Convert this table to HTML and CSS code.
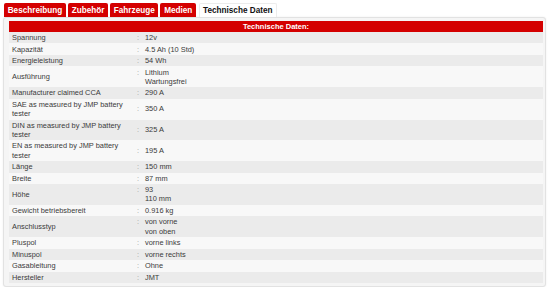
FILE: index.html
```html
<!DOCTYPE html>
<html lang="de">
<head>
<meta charset="utf-8">
<title>Technische Daten</title>
<link rel="stylesheet" href="styles.css">
</head>
<body>
<div class="wrap">
  <nav class="tabs">
    <span class="tab">Beschreibung</span>
    <span class="tab">Zubehör</span>
    <span class="tab">Fahrzeuge</span>
    <span class="tab">Medien</span>
    <span class="tab active">Technische Daten</span>
  </nav>
  <section class="panel">
    <div class="head">Technische Daten:</div>
    <div class="rows">
      <div class="row"><div class="lbl">Spannung</div><div class="val"><span class="col">:</span><span class="txt">12v</span></div></div>
      <div class="row"><div class="lbl">Kapazität</div><div class="val"><span class="col">:</span><span class="txt">4.5 Ah (10 Std)</span></div></div>
      <div class="row"><div class="lbl">Energieleistung</div><div class="val"><span class="col">:</span><span class="txt">54 Wh</span></div></div>
      <div class="row"><div class="lbl">Ausführung</div><div class="val"><span class="col">:</span><span class="txt">Lithium<br>Wartungsfrei</span></div></div>
      <div class="row"><div class="lbl">Manufacturer claimed CCA</div><div class="val"><span class="col">:</span><span class="txt">290 A</span></div></div>
      <div class="row"><div class="lbl">SAE as measured by JMP battery tester</div><div class="val"><span class="col">:</span><span class="txt">350 A</span></div></div>
      <div class="row"><div class="lbl">DIN as measured by JMP battery tester</div><div class="val"><span class="col">:</span><span class="txt">325 A</span></div></div>
      <div class="row"><div class="lbl">EN as measured by JMP battery tester</div><div class="val"><span class="col">:</span><span class="txt">195 A</span></div></div>
      <div class="row"><div class="lbl">Länge</div><div class="val"><span class="col">:</span><span class="txt">150 mm</span></div></div>
      <div class="row"><div class="lbl">Breite</div><div class="val"><span class="col">:</span><span class="txt">87 mm</span></div></div>
      <div class="row"><div class="lbl">Höhe</div><div class="val"><span class="col">:</span><span class="txt">93<br>110 mm</span></div></div>
      <div class="row"><div class="lbl">Gewicht betriebsbereit</div><div class="val"><span class="col">:</span><span class="txt">0.916 kg</span></div></div>
      <div class="row"><div class="lbl">Anschlusstyp</div><div class="val"><span class="col">:</span><span class="txt">von vorne<br>von oben</span></div></div>
      <div class="row"><div class="lbl">Pluspol</div><div class="val"><span class="col">:</span><span class="txt">vorne links</span></div></div>
      <div class="row"><div class="lbl">Minuspol</div><div class="val"><span class="col">:</span><span class="txt">vorne rechts</span></div></div>
      <div class="row"><div class="lbl">Gasableitung</div><div class="val"><span class="col">:</span><span class="txt">Ohne</span></div></div>
      <div class="row"><div class="lbl">Hersteller</div><div class="val"><span class="col">:</span><span class="txt">JMT</span></div></div>
    </div>
  </section>
</div>
</body>
</html>
```
FILE: styles.css
```css
html, body {
  margin: 0;
  padding: 0;
  background: #ffffff;
}
body {
  font-family: "Liberation Sans", Arial, sans-serif;
  color: #3a3a3a;
}
.wrap {
  width: 543px;
  padding: 3px 0 0 3px;
}
.tabs {
  display: flex;
  gap: 2px;
  padding-left: 1px;
  height: 14px;
  align-items: stretch;
}
.tab {
  display: flex;
  align-items: center;
  padding: 0 3.7px;
  background: #d40000;
  color: #ffffff;
  font-weight: bold;
  font-size: 8.2px;
  border-radius: 2px 2px 0 0;
}
.tab.active {
  background: #ffffff;
  color: #111111;
  border: 1px solid #ececec;
  border-bottom: none;
  padding: 0 3.5px 0 3px;
  margin-left: 1px;
}
.panel {
  border: 1px solid #e2e2e2;
  border-radius: 3px;
  background: #f5f5f5;
  box-shadow: 0 0 2px rgba(0,0,0,0.08);
  padding: 3px 2px 3px 5px;
  height: 262px;
}
.head {
  background: #d40000;
  color: #ffffff;
  font-weight: bold;
  font-size: 7.5px;
  text-align: center;
  height: 11px;
  line-height: 11px;
}
.rows {
  display: flex;
  flex-direction: column;
}
.row {
  display: grid;
  grid-template-columns: 128px 1fr;
  font-size: 7.4px;
  line-height: 9.3px;
  padding: 1.1px 0;
}
.row:nth-child(odd) {
  background: #ebebeb;
}
.row:nth-child(even) {
  background: #f8f8f8;
}
.lbl {
  padding-left: 3px;
  padding-right: 8px;
  align-self: center;
}
.val {
  display: flex;
  align-items: flex-start;
  align-self: center;
}
.col {
  width: 8px;
  color: #9a9a9a;
}
.txt {
  color: #3a3a3a;
}
```
